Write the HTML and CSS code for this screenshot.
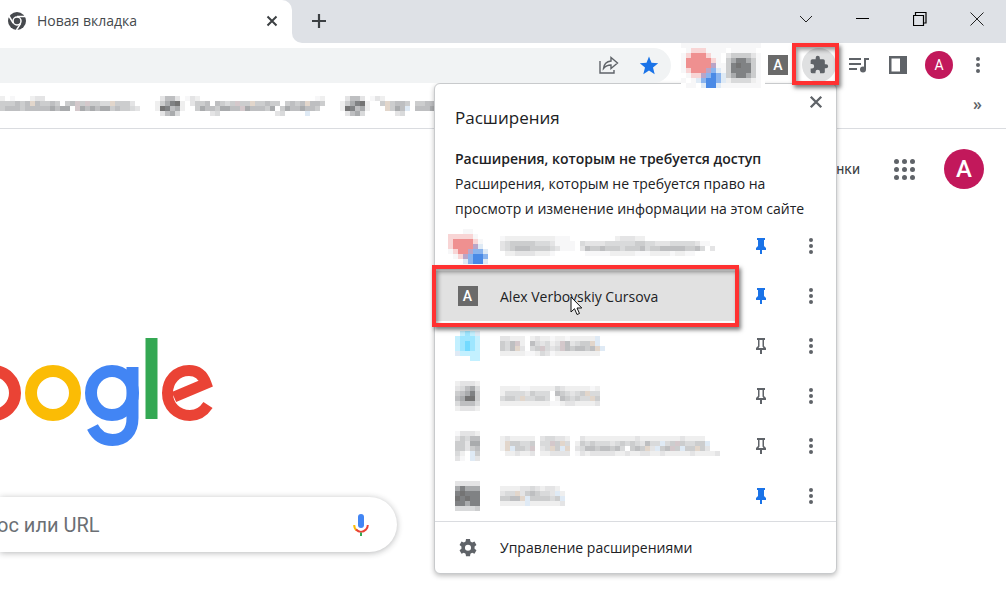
FILE: index.html
```html
<!DOCTYPE html>
<html lang="ru">
<head>
<meta charset="utf-8">
<title>Новая вкладка</title>
<link rel="stylesheet" href="styles.css">
</head>
<body>
<svg class="defs" aria-hidden="true">
  <symbol id="dots" viewBox="0 0 6 18"><circle cx="3" cy="3" r="2"/><circle cx="3" cy="9" r="2"/><circle cx="3" cy="15" r="2"/></symbol>
  <symbol id="pin-on" viewBox="0 0 12 18"><path d="M2 1h8v2H9v6l2 2v2H7v4H5v-4H1v-2l2-2V3H2z"/></symbol>
  <symbol id="pin-off" viewBox="0 0 12 18"><path fill-rule="evenodd" d="M2 1h8v2H9v6l2 2v2H7v4H5v-4H1v-2l2-2V3H2zM4.500 3v6.500L3.500 11h5l-1-1.500V3z"/></symbol>
  <symbol id="cross" viewBox="0 0 12 12"><path d="M1.500 1.500l9 9m0-9l-9 9" fill="none" stroke="currentColor" stroke-width="2"/></symbol>
</svg>
<div class="browser">
  <header class="tabstrip">
    <div class="tab">
      <svg class="favicon" viewBox="0 0 18 18"><circle cx="9" cy="9" r="9" fill="#46494d"/><circle cx="9" cy="9" r="4" fill="none" stroke="#fff" stroke-width="1.500"/><path d="M9 4.600h8.500M5.200 11.200L1 4M12.700 11.300L8.500 18" stroke="#fff" stroke-width="1.500"/></svg>
      <span class="tab-title">Новая вкладка</span>
      <button class="plain tab-close" aria-label="Закрыть вкладку"><svg width="12" height="12"><use href="#cross"/></svg></button>
    </div>
    <button class="plain new-tab" aria-label="Новая вкладка"><svg width="16" height="16" viewBox="0 0 16 16"><path d="M8 1v14M1 8h14" stroke="currentColor" stroke-width="2.200"/></svg></button>
    <div class="window-buttons">
      <button class="plain" aria-label="Поиск вкладок"><svg width="14" height="14" viewBox="0 0 14 14"><path d="M1 4l6 6 6-6" fill="none" stroke="#222"/></svg></button>
      <button class="plain" aria-label="Свернуть"><svg width="14" height="14" viewBox="0 0 14 14"><path d="M0 6.500h13" stroke="#000"/></svg></button>
      <button class="plain" aria-label="Развернуть"><svg width="14" height="14" viewBox="0 0 14 14"><path d="M.5 3.500h10v10H.5zM2.500 3V.5h10.500v10.500h-2.500" fill="none" stroke="#000" stroke-width="1.200"/></svg></button>
      <button class="plain" aria-label="Закрыть"><svg width="14" height="14" viewBox="0 0 14 14"><path d="M.5 .5l13 13m0-13l-13 13" stroke="#222"/></svg></button>
    </div>
  </header>
  <div class="toolbar">
    <div class="omnibox">
      <button class="plain" aria-label="Поделиться"><svg width="20" height="18" viewBox="0 0 20 18"><path d="M1 5v12h14v-3M4.500 12.500c.5-5 3-7 7.500-7.500V1.500l6.500 5.500-6.500 5.500V9c-3.500 0-5.500 1-7.500 3.500z" fill="none" stroke="#5f6368" stroke-width="1.400"/></svg></button>
      <button class="plain" aria-label="Закладка"><svg width="20" height="19" viewBox="0 0 20 19"><path fill="#1a73e8" d="M10 .5l2.500 6.300 6.700.5-5.200 4.300 1.700 6.600L10 14.500l-5.700 3.700L6 11.600.800 7.300l6.700-.5z"/></svg></button>
    </div>
    <div class="pinned" data-mosaic="1111111111111111|.1rrr1111.11111.|1rRRRr11.3555531|1RRRRRr1.5788751|1RRRRRn115898851|1rRRRnbl15888851|.1rrnbBbl5788751|1.1lbBBbl2444421|.11.lBBl11111111"></div>
    <button class="plain letter" aria-label="Alex Verbovskiy Cursova">A</button>
    <button class="plain puzzle" aria-label="Расширения"><svg width="20" height="20" viewBox="0 0 24 24"><path fill="#5f6368" d="M20.500 11H19V7a2 2 0 0 0-2-2h-4V3.500a2.500 2.500 0 0 0-5 0V5H4a2 2 0 0 0-2 2v3.800h1.500a2.700 2.700 0 0 1 0 5.400H2V20a2 2 0 0 0 2 2h3.800v-1.500a2.700 2.700 0 0 1 5.400 0V22H17a2 2 0 0 0 2-2v-4h1.500a2.500 2.500 0 0 0 0-5z"/></svg></button>
    <button class="plain" aria-label="Медиа"><svg width="20" height="18" viewBox="0 0 20 18"><path d="M0 3h12M0 8h12M0 13h8M16 13V3h4" fill="none" stroke="#5f6368" stroke-width="2"/><circle cx="14" cy="13.500" r="3" fill="#5f6368"/></svg></button>
    <button class="plain side" aria-label="Боковая панель"><svg width="18" height="18" viewBox="0 0 18 18"><path fill="#5f6368" fill-rule="evenodd" d="M0 0h18v18H0zM2.500 2.500v13H11v-13z"/></svg></button>
    <button class="plain avatar avatar-small" aria-label="Профиль">A</button>
    <button class="plain more" aria-label="Меню"><svg width="6" height="18"><use href="#dots"/></svg></button>
    <div class="mark mark-puzzle"></div>
  </div>
  <nav class="bookmarks" aria-label="Закладки">
    <span data-mosaic="2.1...233...................|555656w65565.56p5p5544w5553.|56665666667677.p767677565543"></span>
    <span data-mosaic=".3663.|257892|298672|.3674."></span>
    <span data-mosaic="132.......................12|.3556.6545p55w55655.5656w665|..576657766p766657.57667665.|.....34...........34....l..."></span>
    <span data-mosaic=".3663.|257892|298672|.3674."></span>
    <span data-mosaic="132................|..5w5665.5566w56666|...w576l.6667577w66|.....34............"></span>
    <button class="plain chevrons" aria-label="Другие закладки">»</button>
  </nav>
  <main class="page">
    <div class="page-top">
      <a href="#" class="images">Картинки</a>
      <button class="plain apps" aria-label="Приложения"><i></i><i></i><i></i><i></i><i></i><i></i><i></i><i></i><i></i></button>
      <button class="plain avatar avatar-large" aria-label="Аккаунт">A</button>
    </div>
    <svg class="logo" width="216" height="110" viewBox="0 337 216 110" role="img" aria-label="Google" fill="none" stroke-width="12">
      <ellipse cx="-7" cy="393" rx="22" ry="22" stroke="#ea4335"/>
      <ellipse cx="53" cy="393" rx="22" ry="22" stroke="#fbbc05"/>
      <g stroke="#4285f4"><ellipse cx="112" cy="393" rx="21" ry="22"/><path d="M132.500 367v51c0 14-8 22-20 22-9 0-16-5-20-13"/></g>
      <path d="M151.500 338v81" stroke="#34a853"/>
      <path d="M174 397L206 383.500C203 375 197 370.500 189 370.500C176 370.500 167.500 381 167.500 393C167.500 406 177 415.500 190 415.500C198 415.500 204 411 208 405" stroke="#ea4335" stroke-width="11"/>
    </svg>
    <form class="search">
      <input type="text" placeholder="ос или URL" aria-label="Запрос или URL">
      <button type="button" class="plain" aria-label="Голосовой поиск"><svg width="16" height="22" viewBox="0 0 16 22" fill="none"><rect x="5" y="0" width="6" height="14" rx="3" fill="#4285f4"/><path d="M1.200 11c0 3 1 4.500 2.800 5.500" stroke="#fbbc05" stroke-width="2"/><path d="M3 15.500c3 3 7 3 10 0 1.200-1.200 1.800-2.500 1.800-4.500" stroke="#ea4335" stroke-width="2"/><path d="M8 18.500V22" stroke="#34a853" stroke-width="2"/></svg></button>
    </form>
  </main>
  <section class="popup" aria-labelledby="popup-title">
    <button class="plain popup-close" aria-label="Закрыть"><svg width="14" height="14"><use href="#cross"/></svg></button>
    <h1 id="popup-title">Расширения</h1>
    <div class="access">
      <h2>Расширения, которым не требуется доступ</h2>
      <p>Расширения, которым не требуется право на просмотр и изменение информации на этом сайте</p>
    </div>
    <ul class="extensions">
      <li>
        <button class="plain item" aria-label="Расширение 1"><span class="slot" data-mosaic=".....11.....|..rrrrr1....|..rRRRRr1...|..rRRRRnl...|..1rRRnbbl..|...1rnbBBb..|.....lbBBl.."></span><span data-mosaic="12222222222111.........233322.............|345555544431111.43333444444554433344444311|345666555543111.3655655545556455666665564.3|.2233332221......1111122222111222212211..."></span></button>
        <button class="plain pin on" aria-label="Открепить"><svg width="12" height="18"><use href="#pin-on"/></svg></button>
        <button class="plain dots" aria-label="Ещё"><svg width="6" height="18"><use href="#dots"/></svg></button>
      </li>
      <li>
        <button class="plain item current"><span class="slot"><span class="letter">A</span></span><span>Alex Verbovskiy Cursova</span></button>
        <button class="plain pin on" aria-label="Открепить"><svg width="12" height="18"><use href="#pin-on"/></svg></button>
        <button class="plain dots" aria-label="Ещё"><svg width="6" height="18"><use href="#dots"/></svg></button>
      </li>
      <li>
        <button class="plain item" aria-label="Расширение 3"><span class="slot" data-mosaic=".cCcl|cCCCc|cCDCc|cCDCc|lcccc|...cc"></span><span data-mosaic="33222.2322122122222l|546p2.643423p63455wl|546w3.45p434p656656wl|22222112431222222222"></span></button>
        <button class="plain pin" aria-label="Закрепить"><svg width="12" height="18"><use href="#pin-off"/></svg></button>
        <button class="plain dots" aria-label="Ещё"><svg width="6" height="18"><use href="#dots"/></svg></button>
      </li>
      <li>
        <button class="plain item" aria-label="Расширение 4"><span class="slot" data-mosaic="23332|34674|56785|67995|46664|23332"></span><span data-mosaic="22221122222432222212|2444435444.654345w44|4554w44554.2654544w5|22222222221123322223"></span></button>
        <button class="plain pin" aria-label="Закрепить"><svg width="12" height="18"><use href="#pin-off"/></svg></button>
        <button class="plain dots" aria-label="Ещё"><svg width="6" height="18"><use href="#dots"/></svg></button>
      </li>
      <li>
        <button class="plain item" aria-label="Расширение 5"><span class="slot" data-mosaic="13332|35466|55377|55356|42.l5|31.l3"></span><span data-mosaic="2322222.344332..3222222222232222222232222|2w55445.44p5w4.25454443454543644l45p54455l|2wl554p.34w5lw.3466566564.565w3l56p5l55w53|.223223.223333.13233333223223322322222322223"></span></button>
        <button class="plain pin" aria-label="Закрепить"><svg width="12" height="18"><use href="#pin-off"/></svg></button>
        <button class="plain dots" aria-label="Ещё"><svg width="6" height="18"><use href="#dots"/></svg></button>
      </li>
      <li>
        <button class="plain item" aria-label="Расширение 6"><span class="slot" data-mosaic="33333|78777|89888|98988|88788|44445"></span><span data-mosaic="222233432332.|344w3565443l2|5566wl555545l|22222l2222223"></span></button>
        <button class="plain pin on" aria-label="Открепить"><svg width="12" height="18"><use href="#pin-on"/></svg></button>
        <button class="plain dots" aria-label="Ещё"><svg width="6" height="18"><use href="#dots"/></svg></button>
      </li>
    </ul>
    <button class="plain manage"><span class="slot"><svg width="18" height="18" viewBox="0 0 20 20"><path fill="#5f6368" fill-rule="evenodd" d="M7.800 0h4.400l.5 2.700 1.900 1.100 2.600-1 2.200 3.900-2.100 1.700v2.300l2.100 1.800-2.200 3.800-2.600-1-1.900 1.200-.5 2.600H7.800l-.5-2.600-1.900-1.200-2.600 1L.6 12.500l2.100-1.800V8.400L.6 6.700l2.200-3.900 2.600 1 1.900-1.100zM10 6.300a3.400 3.400 0 1 0 0 6.800 3.400 3.400 0 0 0 0-6.800z"/></svg></span><span>Управление расширениями</span></button>
    <div class="mark mark-row"></div>
    <svg class="cursor" width="13" height="20" viewBox="0 0 13 20"><path d="M1 1v15l3.500-3.300L7 18.500l2.500-1L7 12h4.800z" fill="#fff" stroke="#111"/></svg>
  </section>
</div>
<script src="mosaic.js"></script>
</body>
</html>
```
FILE: styles.css
```css
* { box-sizing: border-box; }
body {
  margin: 0;
  background: #fff;
  color: #202124;
  font-family: "Open Sans", "Noto Sans", sans-serif;
  font-size: 14px;
}
.defs { position: absolute; width: 0; height: 0; }
svg { display: block; flex: none; }
.plain {
  display: flex;
  align-items: center;
  justify-content: center;
  padding: 0;
  border: 0;
  background: none;
  color: inherit;
  font: inherit;
  flex: none;
}
.browser { position: relative; min-height: 100vh; overflow: hidden; }

.tabstrip { display: flex; height: 43px; background: #dee1e6; }
.tab {
  display: flex;
  align-items: center;
  width: 292px;
  padding: 0 14px 2px 8px;
  background: #fff;
  border-top-right-radius: 10px;
  color: #45494d;
}
.favicon { width: 18px; height: 18px; }
.tab-title { flex: 1; margin-left: 11px; }
.tab-close { color: #3c4043; }
.new-tab {
  width: 54px;
  padding-bottom: 2px;
  border-bottom-left-radius: 10px;
  color: #3c4043;
}
.tabstrip { background: linear-gradient(#fff, #fff) 292px 33px / 10px 10px no-repeat #dee1e6; }
.new-tab { background: #dee1e6; }
.window-buttons { display: flex; gap: 43px; margin-left: auto; padding: 0 22px 6px 0; }

.toolbar {
  position: relative;
  z-index: 2;
  display: flex;
  align-items: center;
  height: 44px;
  padding-right: 25px;
}
.omnibox {
  display: flex;
  flex: 1;
  align-items: center;
  justify-content: flex-end;
  gap: 20px;
  height: 35px;
  margin-right: 10px;
  padding-right: 12px;
  background: #f1f3f4;
  border-radius: 0 18px 18px 0;
}
.pinned { width: 84px; overflow: hidden; background: #fff; }
.letter {
  display: flex;
  align-items: center;
  justify-content: center;
  width: 20px;
  height: 20px;
  margin-left: 3px;
  background: #6a6a6a;
  color: #fff;
  font-family: Roboto, sans-serif;
  font-size: 14px;
  font-weight: 500;
}
.slot .letter { margin: 0; }
.puzzle { width: 34px; height: 34px; margin: 0 13px 0 14px; border-radius: 50%; background: #dfe0e1; }
.side { margin-left: 20px; }
.avatar { border-radius: 50%; background: #c2185b; color: #fff; font-family: Roboto, sans-serif; }
.avatar-small { width: 28px; height: 28px; margin: 0 22px 0 18px; font-size: 14px; }
.avatar-large { width: 40px; height: 40px; font-size: 24px; font-weight: 500; }
.more, .dots { fill: #5f6368; }

.bookmarks {
  display: flex;
  align-items: flex-start;
  height: 42px;
  padding: 9px 24px 0 0;
  border-bottom: 1px solid #dadce0;
}
.bookmarks span:nth-child(even) { margin-left: 15px; }
.chevrons { height: 16px; margin-left: auto; color: #5f6368; font-size: 16px; font-weight: 600; }

.page-top {
  display: flex;
  align-items: center;
  justify-content: flex-end;
  height: 80px;
  padding-right: 22px;
}
.images { color: #3c4043; font-family: Roboto, sans-serif; text-decoration: none; }
.apps { display: grid; grid-template-columns: repeat(3, 5px); gap: 3px; margin: 0 29px 0 34px; }
.apps i { width: 5px; height: 5px; border-radius: 50%; background: #5f6368; }
.logo { margin-top: 128px; }
.search {
  display: flex;
  align-items: center;
  width: 397px;
  height: 55px;
  margin-top: 50px;
  padding-right: 28px;
  border-radius: 0 28px 28px 0;
  box-shadow: 0 1px 6px rgba(32, 33, 36, .32);
}
.search input {
  flex: 1;
  min-width: 0;
  margin-left: -3px;
  padding: 0;
  border: 0;
  outline: 0;
  background: none;
  font: 20px Roboto, sans-serif;
}
.search input::placeholder { color: #6b6f74; }

.popup {
  position: absolute;
  z-index: 1;
  top: 83px;
  right: 169px;
  width: 403px;
  border: 1px solid #c8cacc;
  border-radius: 6px;
  background: #fff;
  box-shadow: 0 2px 5px rgba(0, 0, 0, .25);
}
.popup-close { position: absolute; top: 11px; right: 13px; color: #5f6368; }
.popup h1 { margin: 0; padding: 22px 20px 16px; font-size: 17px; font-weight: 400; line-height: 24px; }
.access { padding: 0 20px; line-height: 25px; }
.access h2, .access p { margin: 0; font-size: 14px; line-height: 25px; }
.access h2 { font-weight: 600; }
.extensions { margin: 0; padding: 0; list-style: none; }
.extensions li { display: flex; height: 50px; }
.item { flex: 1; justify-content: flex-start; gap: 20px; padding-left: 20px; overflow: hidden; }
.current { background: #e1e1e1; }
.slot { display: flex; justify-content: center; width: 25px; flex: none; }
.pin, .dots { width: 50px; }
.pin { fill: #5f6368; }
.on { fill: #1a73e8; }
.manage { justify-content: flex-start; gap: 20px; width: 100%; height: 52px; padding-left: 20px; border-top: 1px solid #dadce0; }

.mark { position: absolute; border: 4px solid #ff3131; box-shadow: 2px 3px 4px rgba(0, 0, 0, .5), inset 2px 3px 4px rgba(0, 0, 0, .4); pointer-events: none; }
.mark-puzzle { top: 0; right: 167px; width: 47px; height: 42px; }
.mark-row { top: 181px; left: -3px; width: 307px; height: 62px; }
.cursor { position: absolute; top: 212px; left: 135px; }
```
FILE: mosaic.js
```js
// Draws pixelated blocks from rows of palette keys, 5px per cell.
const CELL = 5;
const palette = {
  1: '#f7f7f8', 2: '#efefef', 3: '#e4e4e5', 4: '#d9dadb', 5: '#cccdce',
  6: '#bebfc1', 7: '#a9abad', 8: '#808284', 9: '#747474',
  r: '#f8d5d5', R: '#ef9090', n: '#b9a5c8', b: '#8ab4ee', B: '#4a8ae6', l: '#dfeaf5',
  c: '#c3f0ff', C: '#9ee6ff', D: '#73daff', w: '#e2d6cb', p: '#d4c8cb'
};
for (const host of document.querySelectorAll('[data-mosaic]')) {
  const rows = host.dataset.mosaic.split('|');
  const cols = Math.max(...rows.map(r => r.length));
  let rects = '';
  rows.forEach((row, y) => [...row].forEach((key, x) => {
    if (palette[key]) rects += `<rect x="${x * CELL}" y="${y * CELL}" width="${CELL}" height="${CELL}" fill="${palette[key]}"/>`;
  }));
  host.innerHTML = `<svg aria-hidden="true" shape-rendering="crispEdges" width="${cols * CELL}" height="${rows.length * CELL}">${rects}</svg>`;
}
```
